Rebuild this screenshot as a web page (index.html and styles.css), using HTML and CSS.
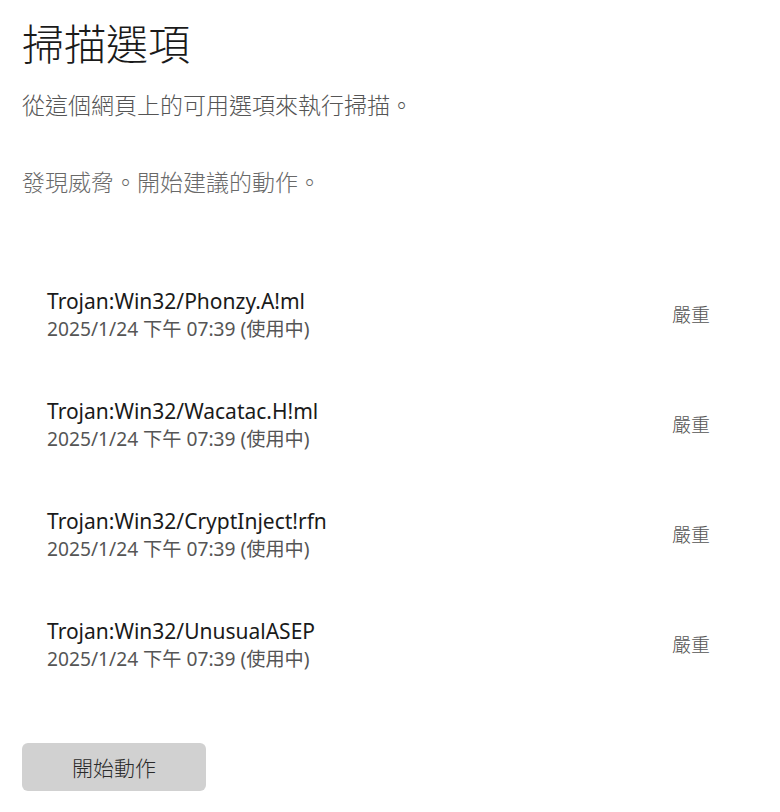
FILE: index.html
```html
<!DOCTYPE html>
<html lang="zh-Hant">
<head>
  <meta charset="UTF-8">
  <title>掃描選項</title>
  <link rel="stylesheet" href="styles.css">
</head>
<body>
  <div class="container">
    <h1 class="title">掃描選項</h1>
    <p class="lead">從這個網頁上的可用選項來執行掃描。</p>
    <p class="note">發現威脅。開始建議的動作。</p>

    <div class="threat-list">
      <div class="threat">
        <div class="threat-info">
          <div class="threat-name">Trojan:Win32/Phonzy.A!ml</div>
          <div class="threat-date">2025/1/24 下午 07:39 (使用中)</div>
        </div>
        <div class="threat-level">嚴重</div>
      </div>
      <div class="threat">
        <div class="threat-info">
          <div class="threat-name">Trojan:Win32/Wacatac.H!ml</div>
          <div class="threat-date">2025/1/24 下午 07:39 (使用中)</div>
        </div>
        <div class="threat-level">嚴重</div>
      </div>
      <div class="threat">
        <div class="threat-info">
          <div class="threat-name">Trojan:Win32/CryptInject!rfn</div>
          <div class="threat-date">2025/1/24 下午 07:39 (使用中)</div>
        </div>
        <div class="threat-level">嚴重</div>
      </div>
      <div class="threat">
        <div class="threat-info">
          <div class="threat-name">Trojan:Win32/UnusualASEP</div>
          <div class="threat-date">2025/1/24 下午 07:39 (使用中)</div>
        </div>
        <div class="threat-level">嚴重</div>
      </div>
    </div>

    <button class="action">開始動作</button>
  </div>
</body>
</html>
```

FILE: styles.css
```css
:root {
  --text: #1a1a1a;
  --text-secondary: #555555;
  --text-muted: #696969;
  --button: #d1d1d1;
}

body {
  margin: 0;
  padding: 17px 22px;
  font-family: "Noto Sans", "Noto Sans CJK TC", sans-serif;
  background: #ffffff;
  color: var(--text);
}

.container {
  display: flex;
  flex-direction: column;
  align-items: flex-start;
}

.title {
  font-family: "Noto Sans CJK TC", sans-serif;
  font-size: 42px;
  line-height: 50px;
  font-weight: 300;
  margin: 0;
}

.lead,
.note {
  font-family: "Noto Sans CJK TC", sans-serif;
  font-size: 23px;
  line-height: 30px;
  font-weight: 300;
  margin: 0;
}

.lead {
  margin-top: 22px;
  color: var(--text-secondary);
}

.note {
  margin-top: 47px;
  color: var(--text-muted);
}

.threat-list {
  align-self: stretch;
  margin-top: 64px;
  padding: 0 48px 0 25px;
}

.threat {
  display: flex;
  align-items: center;
  justify-content: space-between;
  height: 110px;
}

.threat-name {
  font-size: 21px;
  line-height: 28px;
}

.threat-date {
  font-size: 19.2px;
  line-height: 28px;
  color: var(--text-secondary);
}

.threat-level {
  font-family: "Noto Sans CJK TC", sans-serif;
  font-size: 19px;
  font-weight: 300;
  color: var(--text-secondary);
  margin-bottom: 4px;
}

.action {
  margin-top: 43px;
  width: 184px;
  height: 48px;
  border: none;
  border-radius: 6px;
  background: var(--button);
  color: #2b2b2b;
  font-family: "Noto Sans CJK TC", sans-serif;
  font-size: 21px;
  font-weight: 300;
  cursor: pointer;
}
```
